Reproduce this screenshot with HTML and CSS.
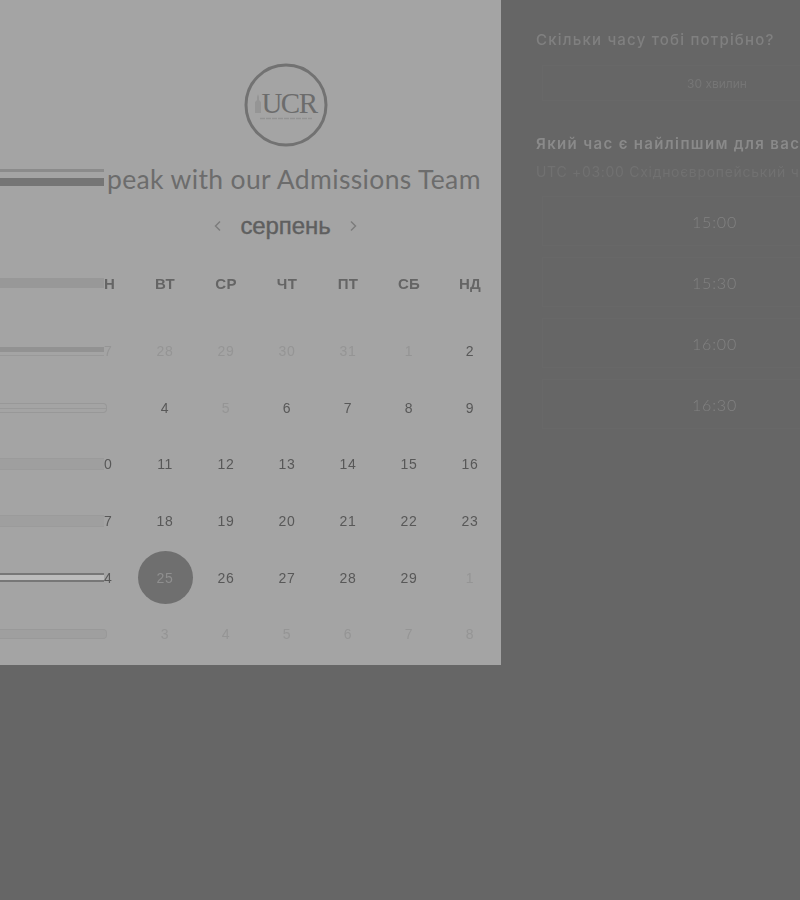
FILE: index.html
```html
<!DOCTYPE html>
<html lang="uk">
<head>
  <meta charset="UTF-8" />
  <meta name="viewport" content="width=device-width, initial-scale=1.0" />
  <title>Speak with our Admissions Team</title>
  <link rel="stylesheet" href="styles.css">
</head>
<body>
<div class="page">
  <section class="picker">
    <svg class="logo" width="88" height="88" viewBox="0 0 88 88">
      <circle class="logo-ring" cx="44" cy="44" r="40" />
      <path class="logo-tower" d="M13 52v-11l2-2v-3l1-3 1 3v3l2 2v11z" />
      <text class="logo-text" x="47" y="52" text-anchor="middle">UCR</text>
      <path class="logo-line" d="M18 57.500h52" />
    </svg>

    <div class="title-row">
      <div class="smear smear-title"><i></i><b></b></div>
      <h1 class="title">peak with our Admissions Team</h1>
    </div>

    <div class="month">
      <svg class="chev" width="10" height="12" viewBox="0 0 10 12"><path d="M7 1.500 2.500 6 7 10.500" /></svg>
      <span class="month-name">серпень</span>
      <svg class="chev" width="10" height="12" viewBox="0 0 10 12"><path d="M3 1.500 7.500 6 3 10.500" /></svg>
    </div>

    <div class="cal">
      <div class="cal-row head">
        <div class="smear smear-head"></div>
        <span class="stub">Н</span>
        <span>ВТ</span><span>СР</span><span>ЧТ</span><span>ПТ</span><span>СБ</span><span>НД</span>
      </div>
      <div class="cal-row">
        <div class="smear smear-a"></div>
        <span class="stub off">7</span>
        <span class="off">28</span><span class="off">29</span><span class="off">30</span><span class="off">31</span><span class="off">1</span><span>2</span>
      </div>
      <div class="cal-row">
        <div class="smear smear-b"></div>
        <span class="stub"></span>
        <span>4</span><span class="off">5</span><span>6</span><span>7</span><span>8</span><span>9</span>
      </div>
      <div class="cal-row">
        <div class="smear smear-c"></div>
        <span class="stub">0</span>
        <span>11</span><span>12</span><span>13</span><span>14</span><span>15</span><span>16</span>
      </div>
      <div class="cal-row">
        <div class="smear smear-c"></div>
        <span class="stub">7</span>
        <span>18</span><span>19</span><span>20</span><span>21</span><span>22</span><span>23</span>
      </div>
      <div class="cal-row">
        <div class="smear smear-d"></div>
        <span class="stub">4</span>
        <span class="sel"><em>25</em></span><span>26</span><span>27</span><span>28</span><span>29</span><span class="off">1</span>
      </div>
      <div class="cal-row">
        <div class="smear smear-e"></div>
        <span class="stub"></span>
        <span class="off">3</span><span class="off">4</span><span class="off">5</span><span class="off">6</span><span class="off">7</span><span class="off">8</span>
      </div>
    </div>
  </section>

  <aside class="side">
    <h2 class="q">Скільки часу тобі потрібно?</h2>
    <div class="slot slot-small">30 хвилин</div>

    <h2 class="q q-bold">Який час є найліпшим для вас?</h2>
    <p class="tz">UTC +03:00 Східноєвропейський час</p>
    <div class="slots">
      <div class="slot">15:00</div>
      <div class="slot">15:30</div>
      <div class="slot">16:00</div>
      <div class="slot">16:30</div>
    </div>
  </aside>
</div>
</body>
</html>
```

FILE: styles.css
```css
html, body {
  margin: 0;
  height: 100%;
  overflow: hidden;
  background: #666666;
}

/* the whole shot is slightly soft */
.page {
  display: flex;
  align-items: flex-start;
  width: 940px;
  font-family: "Liberation Sans", sans-serif;
  filter: blur(0.45px);
}

/* left panel */
.picker {
  flex: none;
  box-sizing: border-box;
  width: 501px;
  height: 665px;
  padding-top: 61px;
  display: flex;
  flex-direction: column;
  background: #a4a4a4;
}

.logo {
  display: block;
  align-self: center;
  margin-left: 70px;
}

.logo-ring {
  fill: none;
  stroke: #727272;
  stroke-width: 3;
}

.logo-tower {
  fill: #959595;
}

.logo-text {
  font-family: "Liberation Serif", serif;
  font-size: 29px;
  letter-spacing: -1.5px;
  fill: #6c6c6c;
}

.logo-line {
  stroke: #929292;
  stroke-width: 1.500;
  stroke-dasharray: 5 1;
}

.title-row {
  display: flex;
  align-items: center;
  height: 40px;
  margin-top: 10px;
}

.title {
  margin: 0 0 0 3px;
  font-family: Lato, sans-serif;
  font-size: 26.500px;
  font-weight: 400;
  letter-spacing: 0.36px;
  white-space: nowrap;
  color: #6c6c6c;
}

.month {
  display: flex;
  align-items: center;
  justify-content: center;
  gap: 17px;
  height: 40px;
  margin-top: 7px;
  margin-left: 70px;
}

.month-name {
  font-size: 24px;
  letter-spacing: -0.1px;
  color: #5f5f5f;
  -webkit-text-stroke: 0.4px #5f5f5f;
}

.chev path {
  fill: none;
  stroke: #7d7d7d;
  stroke-width: 1.500;
}

.cal {
  margin-top: 16px;
}

.cal-row {
  display: grid;
  grid-template-columns: 104px 30.500px repeat(6, 61px);
  grid-auto-rows: 56.600px;
  align-items: center;
  justify-items: center;
  font-size: 14px;
  letter-spacing: 0.6px;
  color: #585858;
}

.head {
  height: 42px;
  grid-auto-rows: 42px;
  margin-bottom: 19px;
  font-size: 15px;
  font-weight: 700;
  letter-spacing: 0.3px;
  color: #656565;
}

.stub {
  justify-self: start;
}

.off {
  color: #959595;
}

.sel {
  display: flex;
  align-items: center;
  justify-content: center;
  width: 55px;
  height: 53px;
  border-radius: 50%;
  background: #6f6f6f;
}

.sel em {
  font-style: normal;
  color: #8f8f8f;
}

/* the stretched bars along the left edge */
.smear {
  justify-self: stretch;
  box-sizing: border-box;
}

.smear-title {
  flex: none;
  width: 104px;
  margin-top: -3px;
}

.smear-title i,
.smear-title b {
  display: block;
}

.smear-title i {
  height: 3px;
  background: #8b8b8b;
}

.smear-title b {
  height: 8px;
  margin-top: 6px;
  background: #757575;
}

.smear-head {
  height: 10px;
  background: #989898;
}

.smear-a {
  height: 9px;
  border-bottom: 1px solid #999999;
  background: linear-gradient(#929292 0 5px, #a4a4a4 5px);
}

.smear-b {
  height: 10px;
  margin-right: -3px;
  border: 1px solid #989898;
  border-left: 0;
  border-radius: 0 4px 4px 0;
  background: linear-gradient(#a4a4a4 4px, #999999 4px 5px, #a4a4a4 5px);
}

.smear-c {
  height: 12px;
  background: #9f9f9f;
  border-bottom: 1px solid #9b9b9b;
  border-top: 1px solid #9b9b9b;
}

.smear-d {
  height: 9px;
  border-top: 2px solid #777777;
  border-bottom: 2px solid #777777;
  background: #bcbcbc;
}

.smear-e {
  height: 10px;
  margin-right: -3px;
  border: 1px solid #999999;
  border-left: 0;
  border-radius: 0 4px 4px 0;
  background: #9f9f9f;
}

/* right column */
.side {
  flex: none;
  box-sizing: border-box;
  width: 439px;
  padding: 30px 0 0 35px;
}

.q {
  margin: 0;
  font-family: Inter, sans-serif;
  font-size: 15px;
  line-height: 20px;
  font-weight: 500;
  letter-spacing: 1.2px;
  white-space: nowrap;
  color: #808080;
}

.q-bold {
  margin-top: 33px;
  font-weight: 600;
  letter-spacing: 1.35px;
  color: #8a8a8a;
}

.tz {
  margin: 9px 0 0;
  font-family: Inter, sans-serif;
  font-size: 14px;
  line-height: 17px;
  letter-spacing: 0.7px;
  white-space: nowrap;
  color: #717171;
}

.slot {
  display: flex;
  align-items: center;
  justify-content: center;
  box-sizing: border-box;
  width: 350px;
  height: 50px;
  margin-left: 6px;
  border: 1px solid #686868;
  font-family: Lato, sans-serif;
  font-size: 16px;
  font-weight: 300;
  letter-spacing: 0.8px;
  color: #828282;
}

.slot-small {
  height: 36px;
  margin-top: 15px;
  font-family: Inter, sans-serif;
  font-size: 12px;
  font-weight: 400;
  letter-spacing: 0;
  color: #767676;
}

.slots {
  display: flex;
  flex-direction: column;
  gap: 11px;
  margin-top: 16px;
}

.slots .slot {
  padding-right: 5px;
}
```
